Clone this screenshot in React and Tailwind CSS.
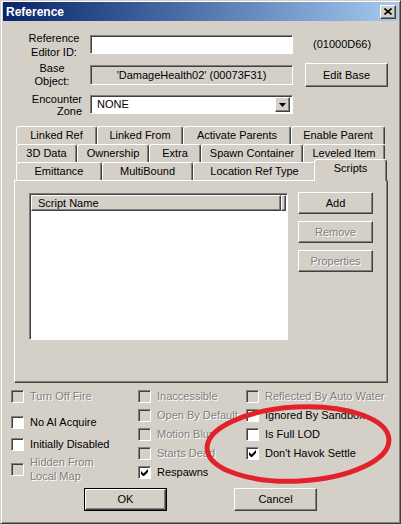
import React from 'react';

// Classic Windows 3D edges
const raised = 'border border-t-white border-l-white border-r-[#404040] border-b-[#404040] shadow-[inset_-1px_-1px_#808080] bg-[#d4d0c8]';
const sunken = 'border border-t-[#808080] border-l-[#808080] border-r-white border-b-white shadow-[inset_1px_1px_#404040]';
const etched = 'text-[#808080] [text-shadow:1px_1px_0_#fff]';

const Button = ({ label, disabled, className = '' }) => (
  <div className={`${raised} flex items-center justify-center ${disabled ? etched : 'text-black'} ${className}`}>
    {label}
  </div>
);

const Tab = ({ label, w }) => (
  <div
    className="h-[18px] flex items-center justify-center border-t border-l border-t-white border-l-white border-r border-r-[#404040] shadow-[inset_-1px_0_#808080] rounded-t-[3px] bg-[#d4d0c8]"
    style={{ width: w }}
  >
    {label}
  </div>
);

const CheckMark = () => (
  <svg width="7" height="7" viewBox="0 0 7 7" className="block">
    <path d="M0 2v3l2 2h1l4-4V0L2.5 4.5z" fill="#000" />
  </svg>
);

const Check = ({ label, checked, disabled, lines }) => (
  <div className={`flex items-center gap-[6px] ${lines ? 'h-[28px]' : 'h-[16px]'}`}>
    <div className={`${sunken} w-[13px] h-[13px] shrink-0 flex items-center justify-center ${disabled ? 'bg-[#d4d0c8]' : 'bg-white'}`}>
      {checked && <CheckMark />}
    </div>
    <div className={`leading-[14px] whitespace-nowrap ${disabled ? etched : 'text-black'}`}>
      {lines ? lines.map((l) => <div key={l}>{l}</div>) : label}
    </div>
  </div>
);

export default function App() {
  return (
    <div className="relative w-[401px] h-[524px] bg-[#d4d0c8] border border-t-[#d4d0c8] border-l-[#d4d0c8] border-r-[#404040] border-b-[#404040] shadow-[inset_1px_1px_#fff,inset_-1px_-1px_#808080] px-[2px] pt-[1px] text-[11px] text-black font-['Liberation_Sans',Arial,sans-serif] overflow-hidden select-none">
      {/* Title bar */}
      <div className="h-[19px] flex items-center justify-between bg-linear-to-r from-[#0a246a] to-[#a6caf0]">
        <span className="pl-[3px] text-white font-bold text-[12px]">Reference</span>
        <div className={`${raised} w-[16px] h-[14px] mr-[2px] flex items-center justify-center`}>
          <svg width="8" height="7" viewBox="0 0 8 7">
            <path d="M0.5 0.5l7 6M7.5 0.5l-7 6" stroke="#000" strokeWidth="1.6" />
          </svg>
        </div>
      </div>

      {/* Editor ID */}
      <div className="mt-[14px] h-[19px] flex items-center">
        <div className="ml-[23px] w-[56px] text-center leading-[14px]">
          <div>Reference</div>
          <div>Editor ID:</div>
        </div>
        <div className={`${sunken} ml-[8px] w-[203px] h-[19px] bg-white`} />
        <span className="ml-[20px]">(01000D66)</span>
      </div>

      {/* Base object */}
      <div className="mt-[9px] h-[24px] flex items-center">
        <div className="ml-[23px] w-[52px] text-center leading-[13px]">
          <div>Base</div>
          <div>Object:</div>
        </div>
        <div className={`${sunken} ml-[12px] w-[203px] h-[20px] flex items-center justify-center`}>
          'DamageHealth02' (00073F31)
        </div>
        <Button label="Edit Base" className="ml-[12px] w-[83px] h-[24px]" />
      </div>

      {/* Encounter zone */}
      <div className="mt-[8px] h-[19px] flex items-center">
        <div className="ml-[23px] w-[56px] text-right leading-[12px]">
          <div>Encounter</div>
          <div>Zone</div>
        </div>
        <div className={`${sunken} ml-[8px] w-[203px] h-[19px] bg-white flex items-center justify-between pl-[6px] pr-[2px]`}>
          <span>NONE</span>
          <div className={`${raised} w-[15px] h-[15px] flex items-center justify-center`}>
            <svg width="7" height="4" viewBox="0 0 7 4">
              <path d="M0 0h7L3.5 4z" fill="#000" />
            </svg>
          </div>
        </div>
      </div>

      {/* Tab strip */}
      <div className="mt-[12px]">
        <div className="ml-[13px] flex">
          <Tab label="Linked Ref" w={81} />
          <Tab label="Linked From" w={86} />
          <Tab label="Activate Parents" w={108} />
          <Tab label="Enable Parent" w={94} />
        </div>
        <div className="ml-[13px] flex">
          <Tab label="3D Data" w={61} />
          <Tab label="Ownership" w={72} />
          <Tab label="Extra" w={52} />
          <Tab label="Spawn Container" w={102} />
          <Tab label="Leveled Item" w={82} />
        </div>
        <div className="ml-[13px] flex items-start h-[18px]">
          <Tab label="Emittance" w={86} />
          <Tab label="MultiBound" w={91} />
          <Tab label="Location Ref Type" w={123} />
          <div className="relative z-10 -mt-[3px] -mr-[2px] -ml-[2px] h-[22px] w-[73px] pb-[4px] flex items-center justify-center border-t border-l border-t-white border-l-white border-r border-r-[#404040] shadow-[inset_-1px_0_#808080] rounded-t-[3px] bg-[#d4d0c8]">
            Scripts
          </div>
        </div>
      </div>

      {/* Scripts page */}
      <div className="ml-[11px] w-[374px] h-[203px] border border-t-white border-l-white border-r-[#404040] border-b-[#404040] shadow-[inset_-1px_-1px_#808080] flex pl-[14px] pt-[12px]">
        <div className={`${sunken} w-[259px] h-[147px] bg-white p-[1px]`}>
          <div className="flex h-[16px]">
            <div className={`${raised} w-[250px] h-[16px] flex items-center pl-[6px]`}>Script Name</div>
            <div className={`${raised} flex-1 h-[16px]`} />
          </div>
        </div>
        <div className="ml-[10px] -mt-[1px] flex flex-col gap-[7px]">
          <Button label="Add" className="w-[75px] h-[22px]" />
          <Button label="Remove" disabled className="w-[75px] h-[22px]" />
          <Button label="Properties" disabled className="w-[75px] h-[22px]" />
        </div>
      </div>

      {/* Flags */}
      <div className="mt-[5px] h-[96px] flex">
        <div className="ml-[8px] w-[127px] flex flex-col">
          <Check label="Turn Off Fire" disabled />
          <div className="mt-[10px]"><Check label="No AI Acquire" /></div>
          <div className="mt-[6px]"><Check label="Initially Disabled" /></div>
          <div className="mt-[3px]"><Check lines={['Hidden From', 'Local Map']} disabled /></div>
        </div>
        <div className="w-[108px] flex flex-col gap-[3px]">
          <Check label="Inaccessible" disabled />
          <Check label="Open By Default" disabled />
          <Check label="Motion Blur" disabled />
          <Check label="Starts Dead" disabled />
          <Check label="Respawns" checked />
        </div>
        <div className="flex flex-col gap-[3px]">
          <Check label="Reflected By Auto Water" disabled />
          <Check label="Ignored By Sandbox" />
          <Check label="Is Full LOD" />
          <Check label="Don't Havok Settle" checked />
        </div>
      </div>

      {/* Dialog buttons */}
      <div className="mt-[4px] flex">
        <div className="ml-[81px] border border-black">
          <Button label="OK" className="w-[81px] h-[21px]" />
        </div>
        <Button label="Cancel" className="ml-[67px] w-[83px] h-[23px]" />
      </div>

      {/* Red marker circle */}
      <svg className="absolute inset-0 pointer-events-none" width="401" height="524" viewBox="0 0 401 524">
        <ellipse cx="297" cy="443" rx="91" ry="37" transform="rotate(-3 297 443)" fill="none" stroke="#e2212b" strokeWidth="5" />
      </svg>
    </div>
  );
}
